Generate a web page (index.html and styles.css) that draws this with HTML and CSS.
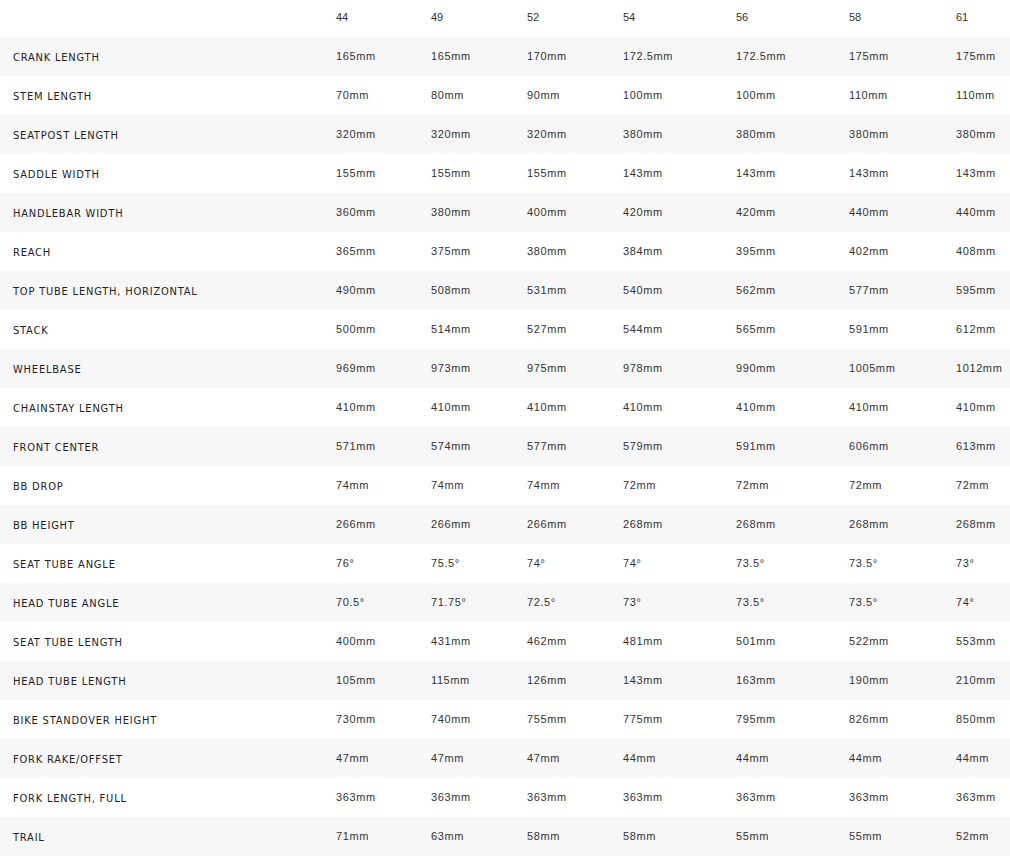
FILE: index.html
```html
<!DOCTYPE html>
<html>
<head>
<meta charset="utf-8">
<link rel="stylesheet" href="styles.css">
</head>
<body>
<div class="geo">
  <div class="row head"><div class="label"></div><div>44</div><div>49</div><div>52</div><div>54</div><div>56</div><div>58</div><div>61</div></div>
  <div class="row"><div class="label">CRANK LENGTH</div><div>165mm</div><div>165mm</div><div>170mm</div><div>172.5mm</div><div>172.5mm</div><div>175mm</div><div>175mm</div></div>
  <div class="row"><div class="label">STEM LENGTH</div><div>70mm</div><div>80mm</div><div>90mm</div><div>100mm</div><div>100mm</div><div>110mm</div><div>110mm</div></div>
  <div class="row"><div class="label">SEATPOST LENGTH</div><div>320mm</div><div>320mm</div><div>320mm</div><div>380mm</div><div>380mm</div><div>380mm</div><div>380mm</div></div>
  <div class="row"><div class="label">SADDLE WIDTH</div><div>155mm</div><div>155mm</div><div>155mm</div><div>143mm</div><div>143mm</div><div>143mm</div><div>143mm</div></div>
  <div class="row"><div class="label">HANDLEBAR WIDTH</div><div>360mm</div><div>380mm</div><div>400mm</div><div>420mm</div><div>420mm</div><div>440mm</div><div>440mm</div></div>
  <div class="row"><div class="label">REACH</div><div>365mm</div><div>375mm</div><div>380mm</div><div>384mm</div><div>395mm</div><div>402mm</div><div>408mm</div></div>
  <div class="row"><div class="label">TOP TUBE LENGTH, HORIZONTAL</div><div>490mm</div><div>508mm</div><div>531mm</div><div>540mm</div><div>562mm</div><div>577mm</div><div>595mm</div></div>
  <div class="row"><div class="label">STACK</div><div>500mm</div><div>514mm</div><div>527mm</div><div>544mm</div><div>565mm</div><div>591mm</div><div>612mm</div></div>
  <div class="row"><div class="label">WHEELBASE</div><div>969mm</div><div>973mm</div><div>975mm</div><div>978mm</div><div>990mm</div><div>1005mm</div><div>1012mm</div></div>
  <div class="row"><div class="label">CHAINSTAY LENGTH</div><div>410mm</div><div>410mm</div><div>410mm</div><div>410mm</div><div>410mm</div><div>410mm</div><div>410mm</div></div>
  <div class="row"><div class="label">FRONT CENTER</div><div>571mm</div><div>574mm</div><div>577mm</div><div>579mm</div><div>591mm</div><div>606mm</div><div>613mm</div></div>
  <div class="row"><div class="label">BB DROP</div><div>74mm</div><div>74mm</div><div>74mm</div><div>72mm</div><div>72mm</div><div>72mm</div><div>72mm</div></div>
  <div class="row"><div class="label">BB HEIGHT</div><div>266mm</div><div>266mm</div><div>266mm</div><div>268mm</div><div>268mm</div><div>268mm</div><div>268mm</div></div>
  <div class="row"><div class="label">SEAT TUBE ANGLE</div><div>76°</div><div>75.5°</div><div>74°</div><div>74°</div><div>73.5°</div><div>73.5°</div><div>73°</div></div>
  <div class="row"><div class="label">HEAD TUBE ANGLE</div><div>70.5°</div><div>71.75°</div><div>72.5°</div><div>73°</div><div>73.5°</div><div>73.5°</div><div>74°</div></div>
  <div class="row"><div class="label">SEAT TUBE LENGTH</div><div>400mm</div><div>431mm</div><div>462mm</div><div>481mm</div><div>501mm</div><div>522mm</div><div>553mm</div></div>
  <div class="row"><div class="label">HEAD TUBE LENGTH</div><div>105mm</div><div>115mm</div><div>126mm</div><div>143mm</div><div>163mm</div><div>190mm</div><div>210mm</div></div>
  <div class="row"><div class="label">BIKE STANDOVER HEIGHT</div><div>730mm</div><div>740mm</div><div>755mm</div><div>775mm</div><div>795mm</div><div>826mm</div><div>850mm</div></div>
  <div class="row"><div class="label">FORK RAKE/OFFSET</div><div>47mm</div><div>47mm</div><div>47mm</div><div>44mm</div><div>44mm</div><div>44mm</div><div>44mm</div></div>
  <div class="row"><div class="label">FORK LENGTH, FULL</div><div>363mm</div><div>363mm</div><div>363mm</div><div>363mm</div><div>363mm</div><div>363mm</div><div>363mm</div></div>
  <div class="row"><div class="label">TRAIL</div><div>71mm</div><div>63mm</div><div>58mm</div><div>58mm</div><div>55mm</div><div>55mm</div><div>52mm</div></div>
</div>
</body>
</html>
```

FILE: styles.css
```css
html, body {
  margin: 0;
  padding: 0;
  background: #fff;
}
.geo {
  width: 1010px;
  font-family: "Liberation Sans", Arial, sans-serif;
  font-size: 11px;
  color: #333;
}
.row {
  display: grid;
  grid-template-columns: 323px 95px 96px 96px 113px 113px 107px 1fr;
  height: 39px;
  align-items: center;
  letter-spacing: 0.6px;
}
.row > div {
  padding-left: 13px;
  padding-bottom: 1px;
  white-space: nowrap;
}
.row:nth-child(even) {
  background: #f7f7f7;
}
.row.head {
  height: 37px;
  letter-spacing: 0;
}
.row.head > div {
  padding-bottom: 4px;
}
.row > .label {
  padding-bottom: 0;
  padding-top: 1px;
  font-family: "DejaVu Sans Condensed", "DejaVu Sans", sans-serif;
  font-size: 11px;
  letter-spacing: 0.8px;
  color: #222;
}
```
